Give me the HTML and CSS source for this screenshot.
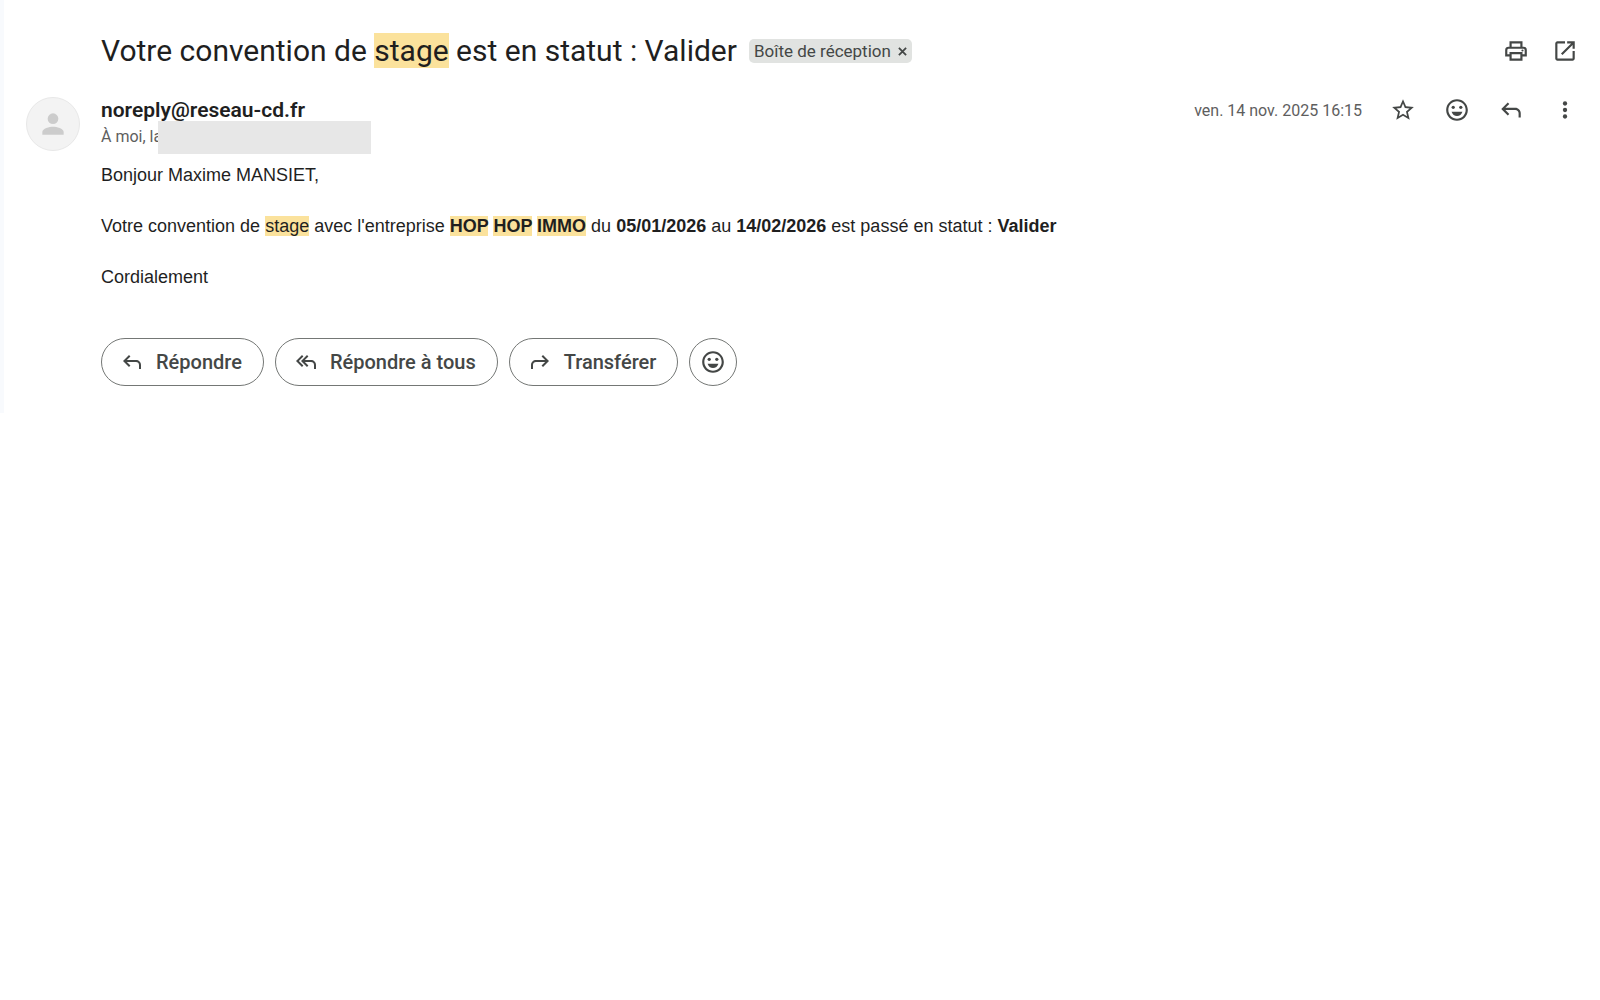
FILE: index.html
```html
<!DOCTYPE html>
<html lang="fr">
  <head>
    <meta charset="UTF-8" />
    <meta name="viewport" content="width=device-width, initial-scale=1.0" />
    <title>Votre convention de stage est en statut : Valider</title>
    <link rel="stylesheet" href="styles.css">
  </head>
  <body>
    <!-- shared icons -->
    <svg class="sprite" aria-hidden="true">
      <symbol id="icon-reply" viewBox="0 0 24 24">
        <path d="M19 19v-4c0-.83-.29-1.54-.88-2.13C17.54 12.29 16.83 12 16 12H6.83l3.6 3.6L9 17l-6-6 6-6 1.43 1.4L6.83 10H16c1.38 0 2.56.49 3.54 1.46C20.51 12.44 21 13.62 21 15v4h-2z" />
      </symbol>
      <symbol id="icon-reply-all" viewBox="0 0 24 24">
        <path d="M8 17l-6-6 6-6 1.4 1.4L4.83 11l4.57 4.6L8 17zm12 2v-4c0-.83-.29-1.54-.88-2.13C18.54 12.29 17.83 12 17 12h-6.17l3.57 3.6L13 17l-6-6 6-6 1.4 1.4L10.83 10H17c1.38 0 2.56.49 3.54 1.46C21.51 12.44 22 13.62 22 15v4h-2z" />
      </symbol>
      <symbol id="icon-smile" viewBox="0 0 24 24">
        <path d="M11.99 2C6.47 2 2 6.48 2 12s4.47 10 9.99 10C17.52 22 22 17.52 22 12S17.52 2 11.99 2zM12 20c-4.42 0-8-3.58-8-8s3.58-8 8-8 8 3.58 8 8-3.58 8-8 8z" />
        <circle cx="8.5" cy="9.5" r="1.5" />
        <circle cx="15.5" cy="9.5" r="1.5" />
        <path d="M7 13.5h10c-.8 2.4-2.6 4-5 4s-4.2-1.6-5-4z" />
      </symbol>
    </svg>

    <main class="message">
      <header class="subject">
        <h1>Votre convention de <mark>stage</mark> est en statut : Valider</h1>
        <div class="label">
          <span>Boîte de réception</span>
          <button type="button" aria-label="Retirer le libellé">
            <svg viewBox="0 0 10 10"><path d="M1 1l8 8M9 1l-8 8" /></svg>
          </button>
        </div>
        <div class="actions">
          <button type="button" aria-label="Imprimer">
            <svg viewBox="0 0 24 24">
              <path fill-rule="evenodd" d="M16 8V5H8v3H6V3h12v5h-2zM8 19h8v-4H8v4zm10 2H6v-4H2v-6c0-.85.29-1.56.88-2.14C3.46 8.29 4.17 8 5 8h14c.85 0 1.56.29 2.14.86.57.58.86 1.29.86 2.14v6h-4v4zm2-6v-4c0-.28-.1-.52-.29-.71A.97.97 0 0 0 19 10H5a.97.97 0 0 0-.71.29A.97.97 0 0 0 4 11v4h2v-2h12v2h2z" />
              <circle cx="18" cy="11.5" r="1" />
            </svg>
          </button>
          <button type="button" aria-label="Nouvelle fenêtre">
            <svg viewBox="0 0 24 24">
              <path d="M5 21c-.55 0-1.02-.2-1.41-.59C3.2 20.02 3 19.55 3 19V5c0-.55.2-1.02.59-1.41C3.98 3.2 4.45 3 5 3h7v2H5v14h14v-7h2v7c0 .55-.2 1.02-.59 1.41-.39.39-.86.59-1.41.59H5zm4.7-5.3l-1.4-1.4L17.6 5H14V3h7v7h-2V6.4l-9.3 9.3z" />
            </svg>
          </button>
        </div>
      </header>

      <section class="sender">
        <div class="avatar">
          <svg viewBox="0 0 24 24">
            <circle cx="12" cy="8" r="4" />
            <path d="M12 14c-2.67 0-8 1.34-8 4v2h16v-2c0-2.66-5.33-4-8-4z" />
          </svg>
        </div>
        <div class="people">
          <h2>noreply@reseau-cd.fr</h2>
          <div class="recipients">
            <span>À moi, la</span>
            <span class="hidden-name"></span>
          </div>
        </div>
        <div class="actions">
          <time datetime="2025-11-14T16:15">ven. 14 nov. 2025 16:15</time>
          <button type="button" aria-label="Suivre">
            <svg viewBox="0 0 24 24">
              <path d="M22 9.24l-7.19-.62L12 2 9.19 8.63 2 9.24l5.46 4.73L5.82 21 12 17.27 18.18 21l-1.63-7.03L22 9.24zM12 15.4l-3.76 2.27 1-4.28-3.32-2.88 4.38-.38L12 6.1l1.71 4.04 4.38.38-3.32 2.88 1 4.28L12 15.4z" />
            </svg>
          </button>
          <button type="button" aria-label="Ajouter une réaction">
            <svg><use href="#icon-smile" /></svg>
          </button>
          <button type="button" aria-label="Répondre">
            <svg><use href="#icon-reply" /></svg>
          </button>
          <button type="button" aria-label="Plus">
            <svg viewBox="0 0 24 24">
              <circle cx="12" cy="6" r="2" />
              <circle cx="12" cy="12" r="2" />
              <circle cx="12" cy="18" r="2" />
            </svg>
          </button>
        </div>
      </section>

      <article class="content">
        <p>Bonjour Maxime MANSIET,</p>
        <p>
          Votre convention de <mark>stage</mark> avec l'entreprise
          <b><mark>HOP</mark> <mark>HOP</mark> <mark>IMMO</mark></b> du
          <b>05/01/2026</b> au <b>14/02/2026</b> est passé en statut :
          <b>Valider</b>
        </p>
        <p>Cordialement</p>
      </article>

      <footer class="replies">
        <button class="reply-button" type="button">
          <svg><use href="#icon-reply" /></svg>
          Répondre
        </button>
        <button class="reply-button" type="button">
          <svg><use href="#icon-reply-all" /></svg>
          Répondre à tous
        </button>
        <button class="reply-button" type="button">
          <svg class="flipped"><use href="#icon-reply" /></svg>
          Transférer
        </button>
        <button class="reply-button round" type="button" aria-label="Ajouter une réaction">
          <svg><use href="#icon-smile" /></svg>
        </button>
      </footer>
    </main>
  </body>
</html>
```
FILE: styles.css
```css
* {
  box-sizing: border-box;
}

body {
  margin: 0;
  background-color: #fff;
  color: #1f1f1f;
  font-family: Roboto, "Open Sans", sans-serif;
}

h1,
h2,
p {
  margin: 0;
}

button {
  padding: 0;
  border: none;
  background: none;
  color: #444746;
  font-family: inherit;
  cursor: pointer;
}

svg {
  display: block;
  width: 26px;
  height: 26px;
  fill: currentColor;
}

mark {
  background-color: #fbe29c;
  color: inherit;
}

.sprite {
  display: none;
}

.message {
  border-left: 4px solid #f8fafd;
  padding: 24px 22px 27px 97px;
}

.subject {
  display: flex;
  align-items: center;
  min-height: 54px;
}

.subject h1 {
  font-size: 30px;
  font-weight: 400;
  line-height: 36px;
}

.label {
  display: flex;
  align-items: center;
  gap: 7px;
  height: 24px;
  margin-left: 12px;
  padding: 0 5px;
  border-radius: 5px;
  background-color: #e1e3e1;
  color: #444746;
  font-size: 17px;
}

.label svg {
  width: 9px;
  height: 9px;
  fill: none;
  stroke: currentColor;
  stroke-width: 2;
}

.actions {
  display: flex;
  align-items: center;
  gap: 28px;
  margin-left: auto;
}

.subject .actions {
  gap: 23px;
}

.sender {
  display: flex;
  align-items: flex-start;
  margin-top: 19px;
  margin-left: -75px;
}

.avatar {
  display: flex;
  align-items: center;
  justify-content: center;
  width: 54px;
  height: 54px;
  margin-right: 21px;
  border: 1px solid #e8e8e8;
  border-radius: 50%;
  background-color: #f3f3f3;
  color: #ccc;
}

.avatar svg {
  width: 32px;
  height: 32px;
}

.people h2 {
  font-size: 21px;
  font-weight: 600;
  line-height: 26px;
}

.recipients {
  display: flex;
  margin-top: -2px;
  color: #5e5e5e;
  font-size: 16px;
  line-height: 32px;
}

/* masked recipient, covers the end of the list */
.hidden-name {
  width: 213px;
  height: 33px;
  margin-left: -4px;
  background-color: #e7e7e7;
}

.sender time {
  color: #5e5e5e;
  font-size: 16px;
}

.content {
  margin-top: 8px;
  font-family: "Liberation Sans", Arial, sans-serif;
  font-size: 18px;
  line-height: 26px;
}

.content p + p {
  margin-top: 25px;
}

.replies {
  display: flex;
  gap: 11px;
  margin-top: 48px;
}

.reply-button {
  display: flex;
  align-items: center;
  gap: 12px;
  height: 48px;
  padding: 0 21px 0 18px;
  border: 1px solid #747775;
  border-radius: 24px;
  font-size: 20px;
  font-weight: 500;
}

.reply-button svg {
  width: 24px;
  height: 24px;
}

.reply-button.round {
  justify-content: center;
  width: 48px;
  padding: 0;
}

.reply-button.round svg {
  width: 26px;
  height: 26px;
}

.flipped {
  transform: scaleX(-1);
}
```
